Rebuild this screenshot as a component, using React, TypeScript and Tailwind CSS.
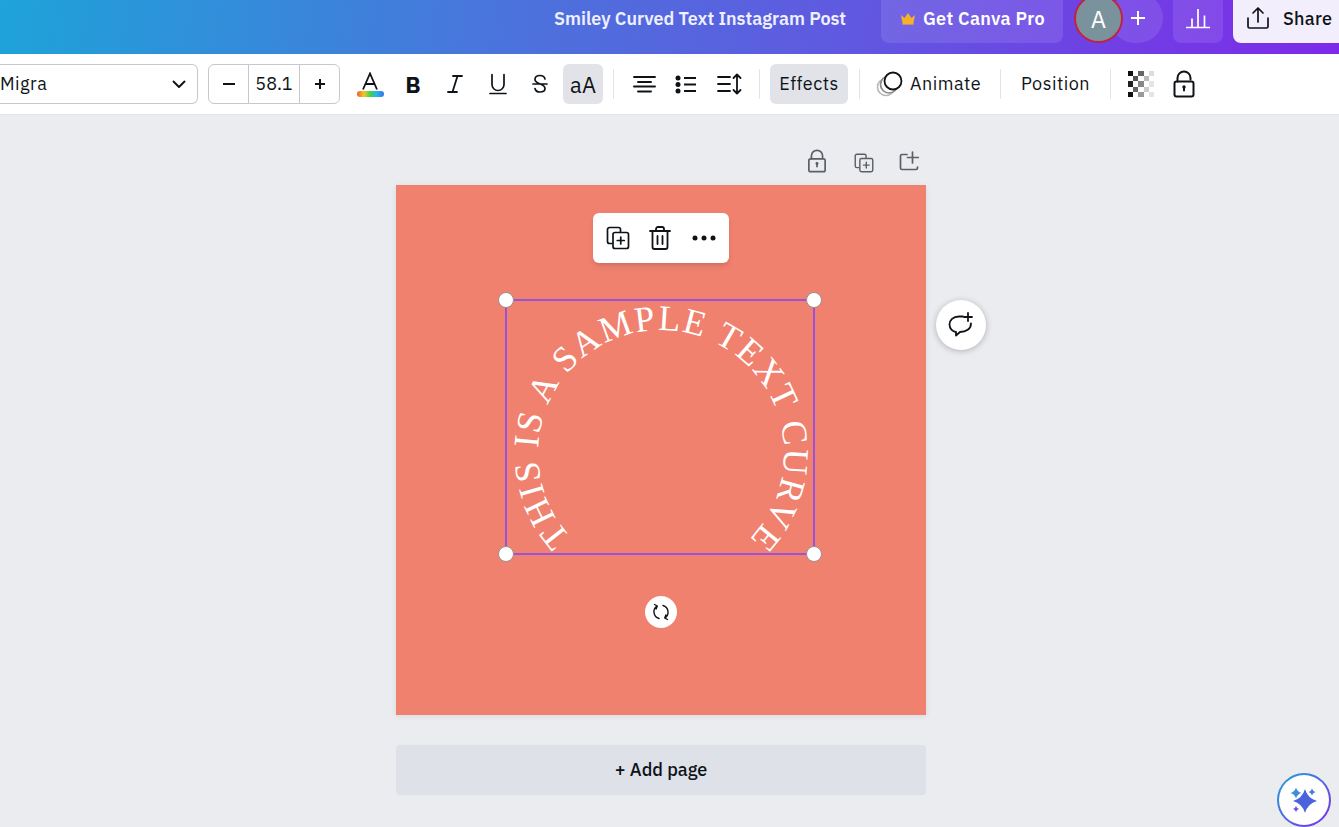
import React from "react";

const font = { fontFamily: '"IBM Plex Sans","Noto Sans",sans-serif' };

const Divider = () => <div className="w-px h-[30px] bg-[#e3e4e8] shrink-0" />;

const Stroke = ({ w = 24, h = 24, sw = 2, children, color = "#0e1318", className = "" }: any) => (
  <svg width={w} height={h} viewBox={`0 0 ${w} ${h}`} fill="none" stroke={color} strokeWidth={sw} strokeLinecap="round" strokeLinejoin="round" className={className}>
    {children}
  </svg>
);

const LockIcon = ({ color = "#0e1318", size = 24 }: any) => (
  <svg width={size} height={size} viewBox="0 0 24 28" fill="none" stroke={color} strokeWidth="2" strokeLinecap="round">
    <rect x="2.500" y="11.500" width="19" height="15" rx="2" />
    <path d="M5.500 11.500V8a6.500 6.500 0 0 1 13 0v1.500" />
    <circle cx="12" cy="17" r="1.700" fill={color} stroke="none" />
    <path d="M12 17v3.500" />
  </svg>
);

const CopyPlus = ({ size = 24, color = "#0e1318", sw = 1.7 }: any) => (
  <svg width={size} height={size} viewBox="0 0 24 24" fill="none" stroke={color} strokeWidth={sw} strokeLinecap="round" strokeLinejoin="round">
    <path d="M6 17.500H3.500a2 2 0 0 1-2-2V3.500a2 2 0 0 1 2-2h9a2 2 0 0 1 2 2V6" />
    <rect x="7" y="6.500" width="15.500" height="16" rx="2" />
    <path d="M14.750 11v7M11.250 14.500h7" />
  </svg>
);

const Handle = ({ className }: { className: string }) => (
  <div className={`absolute w-4 h-4 rounded-full bg-white border border-[#9a8f90] ${className}`} />
);

const IconSlot = ({ children, className = "" }: any) => (
  <div className={`flex items-center justify-center shrink-0 ${className}`}>{children}</div>
);

const star = (cx: number, cy: number, r: number) => {
  const k = r * 0.22;
  return `M${cx} ${cy - r}Q${cx + k} ${cy - k} ${cx + r} ${cy}Q${cx + k} ${cy + k} ${cx} ${cy + r}Q${cx - k} ${cy + k} ${cx - r} ${cy}Q${cx - k} ${cy - k} ${cx} ${cy - r}Z`;
};

export default function App() {
  return (
    <div className="w-[1339px] h-[827px] overflow-hidden flex flex-col bg-[#ebecf0] text-[#0e1318] relative" style={font}>
      {/* top bar */}
      <header className="h-[54px] shrink-0 flex items-start bg-[linear-gradient(100deg,#1ea3d9_0%,#4b73dc_38%,#5f5ae0_62%,#7d2ae8_100%)] text-white">
        <div className="ml-[554px] w-[295px] h-[38px] flex items-center pb-[2px] text-[18px] font-semibold whitespace-nowrap text-[#eef0ff]">
          Smiley Curved Text Instagram Post
        </div>
        <div className="ml-[32px] w-[182px] h-[43px] rounded-b-lg bg-white/10 flex items-center pl-[19px] pb-[7px] gap-[7px]">
          <svg width="16" height="13" viewBox="0 0 16 13"><path d="M1 3l3.500 3L8 1l3.500 5L15 3l-1.500 8h-11z" fill="#f6b02c" /><rect x="2.500" y="11" width="11" height="1.600" fill="#f6b02c" /></svg>
          <span className="text-[18px] font-semibold whitespace-nowrap tracking-[0.3px]">Get Canva Pro</span>
        </div>
        <div className="ml-[11px] relative w-[89px] h-[43px] shrink-0">
          <div className="absolute left-[36px] top-[-7px] w-[53px] h-[50px] rounded-full bg-white/10 flex items-center justify-center pl-[2px]">
            <svg width="16" height="16" viewBox="0 0 16 16" stroke="#fff" strokeWidth="2"><path d="M8 1v14M1 8h14" /></svg>
          </div>
          <div className="absolute left-0 top-[-6px] w-[49px] h-[49px] rounded-full bg-[#7a929c] border-[2.5px] border-[#c4213f] flex items-center justify-center text-[24px] text-white">A</div>
        </div>
        <div className="ml-[10px] w-[50px] h-[43px] rounded-b-lg bg-white/10 flex items-center justify-center pb-[7px]">
          <svg width="26" height="24" viewBox="0 0 26 24" fill="none" stroke="#fff" strokeWidth="1.700"><path d="M1 21.500h24M7 21.500v-9M13 21.500V3M19.500 21.500v-12" /></svg>
        </div>
        <div className="ml-[10px] w-[106px] h-[43px] rounded-bl-lg bg-[#f3eefc] flex items-center pl-[13px] pb-[7px] gap-[13px] text-[#0e1318]">
          <Stroke w={24} h={24} sw={1.7}>
            <path d="M2 12v8.500a1.500 1.500 0 0 0 1.500 1.500h17a1.500 1.500 0 0 0 1.500-1.500V12M12 16V2M7 7l5-5 5 5" />
          </Stroke>
          <span className="text-[18px] font-medium tracking-[0.3px]">Share</span>
        </div>
      </header>

      {/* toolbar */}
      <div className="h-[61px] shrink-0 bg-white border-b border-[#e3e4e8] flex items-center text-[18px] tracking-[0.5px]">
        <div className="w-[198px] h-10 shrink-0 border border-l-0 border-[#c6c8cf] rounded-r-md flex items-center justify-between pr-[11px]">
          <span className="pb-[2px]">Migra</span>
          <Stroke w={14} h={14} sw={1.900}><path d="M1.500 4.500L7 10l5.500-5.500" /></Stroke>
        </div>
        <div className="ml-[10px] w-[132px] h-10 shrink-0 border border-[#c6c8cf] rounded-md flex items-center">
          <div className="w-10 h-full flex items-center justify-center border-r border-[#c6c8cf]">
            <svg width="12" height="2"><rect width="12" height="2" fill="#0e1318" /></svg>
          </div>
          <div className="w-[51px] h-full flex items-center justify-center border-r border-[#c6c8cf] pb-[2px] text-[18px] tracking-normal">58.1</div>
          <div className="flex-1 flex items-center justify-center">
            <svg width="12" height="12" viewBox="0 0 12 12" stroke="#0e1318" strokeWidth="2"><path d="M6 1v10M1 6h10" /></svg>
          </div>
        </div>
        <IconSlot className="ml-[16px] w-[28px] h-10 flex-col">
          <svg width="18" height="18" viewBox="0 0 18 18" fill="none" stroke="#0e1318" strokeWidth="1.800"><path d="M2 17.500L9 1.500l7 16M4.500 12h9" /></svg>
          <div className="w-[27px] h-[6px] rounded-full mt-[1px] bg-[linear-gradient(90deg,#f05a28,#f7c52b_25%,#3ed34a_50%,#24b7e8_72%,#3a6ff0)]" />
        </IconSlot>
        <div className="ml-[22px] w-[14px] text-[23px] font-bold leading-none flex justify-center tracking-normal">B</div>
        <IconSlot className="ml-[27px] w-[16px]">
          <Stroke w={16} h={20} sw={1.8}><path d="M6 2h9M1 18h9M10.500 2l-5 16" /></Stroke>
        </IconSlot>
        <IconSlot className="ml-[26px] w-[18px]">
          <Stroke w={18} h={22} sw={1.7}><path d="M3 1.500v10a6 6 0 0 0 12 0v-10M1 20.500h16" /></Stroke>
        </IconSlot>
        <IconSlot className="ml-[25px] w-[16px]">
          <Stroke w={16} h={20} sw={1.7}><path d="M13 5c-.5-2-2.500-3.500-5-3.500-3 0-5 1.500-5 4 0 5 10 3.500 10 9 0 2.500-2 3.500-5 3.500-2.500 0-4.500-1-5-3.500M1 10h14" /></Stroke>
        </IconSlot>
        <div className="ml-[15px] w-10 h-10 rounded-md bg-[#e2e3e9] flex items-center justify-center text-[22px] shrink-0 tracking-normal">aA</div>
        <div className="ml-[10px]"><Divider /></div>
        <IconSlot className="ml-[19px] w-[23px]">
          <Stroke w={23} h={18} sw={1.9}><path d="M1 2h21M5 7h13M1 11.500h21M5 16.500h13" /></Stroke>
        </IconSlot>
        <IconSlot className="ml-[19px] w-[21px]">
          <svg width="21" height="19" viewBox="0 0 21 19" fill="#0e1318"><circle cx="3" cy="3" r="2.500" /><circle cx="3" cy="9.500" r="2.500" /><circle cx="3" cy="16" r="2.500" /><rect x="9" y="2" width="12" height="2" /><rect x="9" y="8.500" width="12" height="2" /><rect x="9" y="15" width="12" height="2" /></svg>
        </IconSlot>
        <IconSlot className="ml-[21px] w-[25px]">
          <Stroke w={25} h={22} sw={1.8}><path d="M1 4h12M1 11h12M1 18h12M20 2v18M16.500 5L20 1.500 23.500 5M16.500 17l3.500 3.500 3.500-3.500" /></Stroke>
        </IconSlot>
        <div className="ml-[17px]"><Divider /></div>
        <div className="ml-[10px] w-[78px] h-10 rounded-md bg-[#e2e3e9] flex items-center justify-center pb-[2px] shrink-0">Effects</div>
        <div className="ml-[11px]"><Divider /></div>
        <IconSlot className="ml-[16px] w-[27px]">
          <svg width="27" height="26" viewBox="0 0 27 26" fill="none">
            <circle cx="10" cy="16" r="8.500" stroke="#b9b9b9" strokeWidth="1.700" />
            <circle cx="13" cy="13.500" r="8.500" stroke="#8a8a8a" strokeWidth="1.700" fill="#fff" />
            <circle cx="17" cy="10" r="8.500" stroke="#0e1318" strokeWidth="1.800" fill="#fff" />
          </svg>
        </IconSlot>
        <span className="ml-[7px] w-[71px] shrink-0 pb-[2px]">Animate</span>
        <div className="ml-[19px]"><Divider /></div>
        <span className="ml-[20px] w-[69px] shrink-0 pb-[2px]">Position</span>
        <div className="ml-[20px]"><Divider /></div>
        <div className="ml-[17px] w-[26px] h-[26px] grid grid-cols-5 grid-rows-5 shrink-0">
          {[
            "#111", "", "#666", "", "#ddd",
            "", "#555", "", "#bbb", "",
            "#222", "", "#888", "", "#e5e5e5",
            "", "#666", "", "#ccc", "",
            "#111", "", "#999", "", "#e5e5e5",
          ].map((c, i) => (
            <div key={i} style={{ backgroundColor: c || "transparent" }} />
          ))}
        </div>
        <div className="ml-[16px] flex"><LockIcon size={28} /></div>
      </div>

      {/* canvas */}
      <main className="flex-1 relative pl-[396px]">
        <div className="w-[530px] h-[70px] flex items-end justify-end pb-[12px] pr-[7px] gap-[25px]">
          <LockIcon color="#5b5f66" size={24} />
          <CopyPlus size={20} color="#5b5f66" />
          <svg className="mb-[2px]" width="20" height="20" viewBox="0 0 20 20" fill="none" stroke="#5b5f66" strokeWidth="1.700" strokeLinecap="round" strokeLinejoin="round"><path d="M8 3.500H3a1.500 1.500 0 0 0-1.500 1.500v12A1.500 1.500 0 0 0 3 18.500h14A1.500 1.500 0 0 0 18.500 17v-1M13.500 1v11M8.500 6.500h11" /></svg>
        </div>

        <div className="relative w-[530px] h-[530px] bg-[#f0816e] shadow-[0_1px_6px_rgba(0,0,0,0.08)]">
          <div className="absolute left-[197px] top-[28px] w-[136px] h-[50px] rounded-md bg-white shadow-md flex items-center pl-[13px] gap-[19px]">
            <CopyPlus size={24} />
            <Stroke w={22} h={24} sw={1.8}>
              <path d="M1 5h20M7 5V3a2 2 0 0 1 2-2h4a2 2 0 0 1 2 2v2M3.500 5v16a2 2 0 0 0 2 2h11a2 2 0 0 0 2-2V5M8.500 10v8M13.500 10v8" />
            </Stroke>
            <svg className="ml-[2px]" width="24" height="6" viewBox="0 0 24 6" fill="#0e1318"><circle cx="3" cy="3" r="2.500" /><circle cx="12" cy="3" r="2.500" /><circle cx="21" cy="3" r="2.500" /></svg>
          </div>

          <div className="absolute left-[109px] top-[114px] w-[310px] h-[256px] border-2 border-[#9b51d8]">
            <svg className="absolute -left-[2px] -top-[2px] overflow-visible" width="310" height="256" viewBox="0 0 310 256">
              <defs>
                <path id="arc" d="M 66 238 A 123 123 0 1 1 239 245" />
              </defs>
              <text fill="#fff" fontSize="36" style={{ fontFamily: '"Liberation Serif",serif' }}>
                <textPath href="#arc" textLength="573" lengthAdjust="spacing">THIS IS A SAMPLE TEXT CURVE</textPath>
              </text>
            </svg>
            <Handle className="-left-[9px] -top-[9px]" />
            <Handle className="-right-[9px] -top-[9px]" />
            <Handle className="-left-[9px] -bottom-[9px]" />
            <Handle className="-right-[9px] -bottom-[9px]" />
          </div>

          <div className="absolute left-[249px] top-[411px] w-[32px] h-[32px] rounded-full bg-white flex items-center justify-center">
            <Stroke w={18} h={18} sw={1.4}>
              <path d="M7 15.500A7 7 0 0 1 5 3M2.500 1.500L5.300 3l-1.200 3M11 2.500A7 7 0 0 1 13 15M15.500 16.500L12.700 15l1.200-3" />
            </Stroke>
          </div>

          <div className="absolute left-[540px] top-[115px] w-[50px] h-[50px] rounded-full bg-white shadow-[0_1px_6px_rgba(0,0,0,0.25)] flex items-center justify-center">
            <Stroke w={28} h={26} sw={1.800}>
              <path d="M16 4.500H12C6 4.500 2.500 8 2.500 12.500c0 4 3 7 6.500 7.500v3.500l4-3.500c6 0 11-3 11-8.500" />
              <path d="M21 1v8M17 5h8" />
            </Stroke>
          </div>
        </div>

        <div className="mt-[30px] w-[530px] h-[50px] rounded bg-[#dfe1e8] flex items-center justify-center pb-[2px] text-[18px] font-medium">+ Add page</div>

        <div className="absolute left-[1277px] top-[658px] w-[54px] h-[54px] rounded-full p-[2px] bg-[linear-gradient(135deg,#1fa5d8,#7d2ae8)]">
          <div className="w-full h-full rounded-full bg-white flex items-center justify-center">
            <svg width="28" height="28" viewBox="0 0 28 28">
              <path d={star(15, 15, 12)} fill="#4a63dc" />
              <path d={star(6, 7, 5.500)} fill="#3b8edb" />
              <path d={star(22, 6, 3.500)} fill="#4a7adc" />
              <path d={star(6, 23, 3)} fill="#6a4fe0" />
            </svg>
          </div>
        </div>
      </main>
    </div>
  );
}
